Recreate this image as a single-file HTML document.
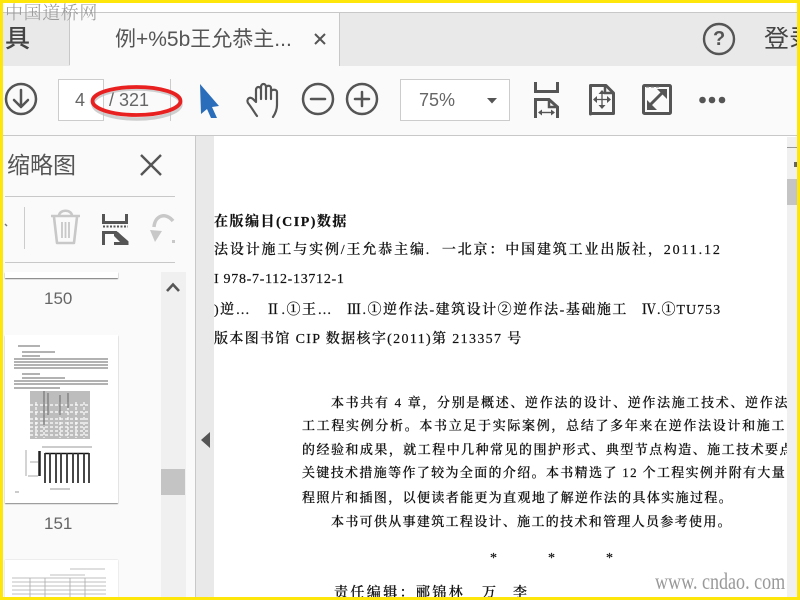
<!DOCTYPE html>
<html><head><meta charset="utf-8"><style>
html,body{margin:0;padding:0;width:800px;height:600px;overflow:hidden;background:#fff}
.a{position:absolute}
.t{position:absolute;white-space:pre;line-height:1}
.ui{font-family:"Liberation Sans","Noto Sans CJK SC",sans-serif;color:#555}
.d{font-family:"Liberation Serif","Noto Serif CJK SC",serif;color:#111;font-size:14px;font-weight:500;-webkit-text-stroke:.2px #111}
.b{font-size:13px;letter-spacing:1.67px}
svg{position:absolute;left:0;top:0}
</style></head><body>
<div class="a" style="left:0;top:12px;width:800px;height:53px;background:#e9e9e9;border-top:1px solid #c8c8c8;border-bottom:1px solid #c8c8c8"></div>
<div class="a" style="left:0;top:12px;width:69px;height:53px;border-right:1px solid #c8c8c8"></div>
<div class="a" style="left:70px;top:13px;width:269px;height:53px;background:#fafafa;border-right:1px solid #c8c8c8"></div>
<div class="a" style="left:0;top:66px;width:800px;height:69px;background:#fafafa;border-bottom:1px solid #c8c8c8"></div>
<div class="a" style="left:0;top:136px;width:195px;height:464px;background:#fafafa;border-right:1px solid #c8c8c8"></div>
<div class="a" style="left:196px;top:136px;width:18px;height:464px;background:#e9e9e9"></div>
<div class="a" style="left:787px;top:137px;width:13px;height:463px;background:#f0f0f0"></div>
<div class="a" style="left:787px;top:179px;width:13px;height:26px;background:#c4c4c4"></div>
<div class="a" style="left:786px;top:147px;width:11px;height:1px;background:#999"></div>
<div class="a" style="left:794px;top:162px;width:3px;height:5px;background:#666"></div>
<div class="a" style="left:58px;top:79px;width:44px;height:40px;background:#fff;border:1px solid #ccc"></div>
<div class="a" style="left:400px;top:79px;width:108px;height:40px;background:#fff;border:1px solid #ccc"></div>
<div class="a" style="left:170px;top:79px;width:1px;height:42px;background:#ccc"></div>
<div class="a" style="left:5px;top:196px;width:170px;height:1px;background:#c8c8c8"></div>
<div class="a" style="left:5px;top:262px;width:170px;height:1px;background:#c8c8c8"></div>
<div class="a" style="left:24px;top:207px;width:1px;height:42px;background:#ccc"></div>
<div class="a" style="left:161px;top:272px;width:25px;height:328px;background:#f0f0f0"></div>
<div class="a" style="left:161px;top:469px;width:24px;height:26px;background:#c4c4c4"></div>
<div class="a" style="left:5px;top:272px;width:113px;height:6px;background:#fff;box-shadow:0 1px 1px #777"></div>
<div class="a" style="left:5px;top:335px;width:113px;height:168px;background:#fff;box-shadow:0 1px 1px #888"></div>
<div class="a" style="left:5px;top:560px;width:113px;height:40px;background:#fff;box-shadow:0 0 1px #bbb"></div>

<svg width="800" height="600" viewBox="0 0 800 600" fill="none">
<g stroke="#999" stroke-width="1.500">
<path d="M18 346H40M22 352H55M22 356H40M14 359H108M14 362H108M14 365H108M14 368H108M22 374H40M22 378H65M14 381H108M14 384H108M14 388H60"/>
</g>
<rect x="30" y="391" width="60" height="48" fill="#bdbdbd"/>
<g stroke="#fff" stroke-width="1.200" stroke-dasharray="3 2"><path d="M30 405H90M30 412H90M30 419H90M30 423H90M30 427H90M30 431H90M30 435H90M36 402V438M44 402V438M60 402V438M68 402V438M76 402V438M84 402V438"/></g>
<path d="M44 391V425M48 393V415M60 395V415M68 393V408" stroke="#777" stroke-width="1.200"/>
<path d="M45 453.500H89" stroke="#111" stroke-width="1.500"/>
<path d="M39.500 451V476" stroke="#222" stroke-width="2.500"/>
<path d="M45 453V483M50 453V483M56 453V483M61 453V483M67 453V483M73 453V483M78 453V483M84 453V483M89 453V483" stroke="#333" stroke-width="1.800"/>
<path d="M26 450V476M28 476H38M30 462H38" stroke="#aaa" stroke-width="1"/>
<path d="M42 447H92M50 489H70M15 492H19" stroke="#999" stroke-width="1"/>
<path d="M70 569H105M50 575H85M12 578H106M12 582H106M12 586H106M12 590H106M12 594H106M30 578V597M45 578V597M70 578V597M85 578V597" stroke="#aaa" stroke-width=".8"/>

<g stroke="#555" stroke-width="2.500" stroke-linecap="round" stroke-linejoin="round">
<circle cx="21" cy="99" r="15"/><path d="M21 90V107M14 100L21 107L28 100"/>
<circle cx="318" cy="99" r="15"/><path d="M311 99H325"/>
<circle cx="362" cy="99" r="15"/><path d="M355 99H369M362 92V106"/>
<path stroke-width="2.200" d="M257 116C254 112 252 108 248 103C246 99 250 96 253 99L256 102V90C256 86 261 86 261 90V99V87C261 83 266 83 266 87V99V88C266 85 271 85 271 88V99V92C271 89 277 89 277 92V105C277 110 275 114 273 117"/>
</g>
<path d="M200 84L219 106L212 107L217 118L211 118L207 109L201 114Z" fill="#2a6ebb"/>
<ellipse cx="137" cy="104" rx="44" ry="15" stroke="#bbb" stroke-width="3.500" opacity=".7"/>
<ellipse cx="136.500" cy="101" rx="44" ry="14" stroke="#e8201f" stroke-width="3.800"/>

<path d="M487 98H497L492 103.500Z" fill="#555"/>
<circle cx="719" cy="39" r="15" stroke="#555" stroke-width="2.400"/>
<path d="M315 34L325 44M325 34L315 44" stroke="#555" stroke-width="2"/>

<g stroke="#555" stroke-width="3" fill="none">
<path d="M535.500 82V91.500H557.500V82"/>
<path d="M535.500 118V99.500H549L557.500 107V118"/>
<path d="M549 99V107H557" stroke-width="2.500"/>
<path d="M590.500 114V85.500H606L613.500 93V113.500H590.500Z" stroke-linejoin="round"/>
<path d="M605 85V93H613" stroke-width="2.500"/>
<rect x="643.500" y="85.500" width="27" height="28" rx="1"/>
</g>
<path d="M539 112.500H554" stroke="#555" stroke-width="1.400"/>
<path d="M542 109.500L538 112.500L542 115.500ZM551 109.500L555 112.500L551 115.500Z" fill="#555"/>
<path d="M602 92V107M595 99.500H609" stroke="#555" stroke-width="1.300"/>
<path d="M602 90L598.500 94H605.500ZM602 109L598.500 105H605.500ZM593 99.500L597 96V103ZM611 99.500L607 96V103Z" fill="#555"/>
<path d="M646 87H649M651 87H654M656 87H659" stroke="#777" stroke-width="1"/>
<path d="M650 105L662 93" stroke="#555" stroke-width="3"/>
<path d="M667 89V99L657 89ZM647 110V100L657 110Z" fill="#555"/>
<circle cx="702.500" cy="100" r="3.300" fill="#555"/><circle cx="712" cy="100" r="3.300" fill="#555"/><circle cx="722" cy="100" r="3.300" fill="#555"/>

<path d="M141 155L161 175M161 155L141 175" stroke="#555" stroke-width="2.400"/>
<path d="M5 224L7 226" stroke="#777" stroke-width="1.500"/>
<g stroke="#c8c8c8" stroke-width="2.600" stroke-linejoin="round">
<path d="M51 216H80M59 216C59 209 72 209 72 216"/>
<path d="M54 217L57 243H74L77 217"/>
<path d="M62 222V238M65.500 222V238M69 222V238" stroke-width="1.800"/>
<path d="M173 221C166 212 155 215 154 227" stroke-width="3.500"/>
</g>
<path d="M150 230L162 231L155 242Z" fill="#c8c8c8"/>
<rect x="172" y="240" width="3" height="3" fill="#c8c8c8"/>
<g stroke="#555" stroke-width="3">
<path d="M103.500 214V222.500H126.500V214"/>
<path d="M103.500 245V232.500H116L127 242V245"/>
<path d="M103 226.500H128" stroke-width="2" stroke-dasharray="2 1.500"/>
</g>
<path d="M114 232H118L128 242V245H114V242H120L114 236Z" fill="#555"/>
<path d="M167 291L173 284.500L179 291" stroke="#555" stroke-width="2.600"/>
<path d="M201 440L210 432V448Z" fill="#555"/>
</svg>

<div class="t ui" style="left:5px;top:27px;font-size:25px;color:#444;font-weight:500;width:26px;overflow:hidden">具</div>
<div class="t ui" style="left:115px;top:29px;font-size:21px;color:#555">例+%5b王允恭主...</div>
<div class="t ui" style="left:713px;top:29px;font-size:20px;font-weight:700;color:#555">?</div>
<div class="t ui" style="left:764px;top:27px;font-size:25px;color:#444;width:33px;overflow:hidden">登录</div>
<div class="t ui" style="left:75px;top:91px;font-size:18px;color:#666">4</div>
<div class="t ui" style="left:109px;top:91px;font-size:18px;color:#666">/ 321</div>
<div class="t ui" style="left:419px;top:91px;font-size:18px;color:#666">75%</div>
<div class="t ui" style="left:7px;top:154px;font-size:23px;color:#555">缩略图</div>
<div class="t ui" style="left:44px;top:290px;font-size:17px;color:#666">150</div>
<div class="t ui" style="left:44px;top:515px;font-size:17px;color:#666">151</div>

<div class="a" style="left:214px;top:136px;width:573px;height:461px;background:#fff;overflow:hidden"><div style="position:absolute;left:-214px;top:-136px;width:800px;height:600px">
<div class="t d" style="left:214px;top:216px;font-weight:700;letter-spacing:1.500px">在版编目(CIP)数据</div>
<div class="t d" style="left:214px;top:244px;letter-spacing:1.850px">法设计施工与实例/王允恭主编.  一北京&#xFF1A;中国建筑工业出版社&#xFF0C;2011.12</div>
<div class="t d" style="left:214px;top:273px;letter-spacing:.7px">I 978-7-112-13712-1</div>
<div class="t d" style="left:214px;top:304px;letter-spacing:1.500px">)逆…</div>
<div class="t d" style="left:266px;top:304px;letter-spacing:1.500px">Ⅱ.①王…</div>
<div class="t d" style="left:347px;top:304px;letter-spacing:1.500px">Ⅲ.①逆作法-建筑设计②逆作法-基础施工</div>
<div class="t d" style="left:642px;top:304px;letter-spacing:1px">Ⅳ.①TU753</div>
<div class="t d" style="left:214px;top:333px;letter-spacing:1.350px">版本图书馆 CIP 数据核字(2011)第 213357 号</div>
<div class="t d b" style="left:331px;top:396px">本书共有 4 章&#xFF0C;分别是概述、逆作法的设计、逆作法施工技术、逆作法</div>
<div class="t d b" style="left:302px;top:419px">工工程实例分析。本书立足于实际案例&#xFF0C;总结了多年来在逆作法设计和施工</div>
<div class="t d b" style="left:302px;top:443px;letter-spacing:1.470px">的经验和成果&#xFF0C;就工程中几种常见的围护形式、典型节点构造、施工技术要点</div>
<div class="t d b" style="left:302px;top:466px;letter-spacing:1.350px">关键技术措施等作了较为全面的介绍。本书精选了 12 个工程实例并附有大量</div>
<div class="t d b" style="left:302px;top:491px;letter-spacing:1.370px">程照片和插图&#xFF0C;以便读者能更为直观地了解逆作法的具体实施过程。</div>
<div class="t d b" style="left:331px;top:515px;letter-spacing:1.320px">本书可供从事建筑工程设计、施工的技术和管理人员参考使用。</div>
<div class="t d" style="left:490px;top:552px">*</div><div class="t d" style="left:548px;top:552px">*</div><div class="t d" style="left:606px;top:552px">*</div>
<div class="t d" style="left:334px;top:587px;letter-spacing:2.400px">责任编辑&#xFF1A;</div>
<div class="t d" style="left:416px;top:587px;letter-spacing:2.400px">郦锦林</div>
<div class="t d" style="left:482px;top:587px">万</div>
<div class="t d" style="left:513px;top:587px">李</div>
</div></div>

<div class="t" style="left:655px;top:570px;font-family:'Liberation Serif',serif;font-size:23px;color:#999;transform-origin:left top;transform:scaleX(.785)">www. cndao. com</div>
<div class="t" style="left:5px;top:3px;font-family:'Noto Serif CJK SC',serif;font-size:18px;color:#999;font-weight:300;letter-spacing:.6px">中国道桥网</div>

<div class="a" style="left:0;top:0;width:800px;height:3px;background:#ffe60a"></div>
<div class="a" style="left:0;top:597px;width:800px;height:3px;background:#ffe60a"></div>
<div class="a" style="left:0;top:0;width:3px;height:600px;background:#ffe60a"></div>
<div class="a" style="left:797px;top:0;width:3px;height:600px;background:#ffe60a"></div>
</body></html>
